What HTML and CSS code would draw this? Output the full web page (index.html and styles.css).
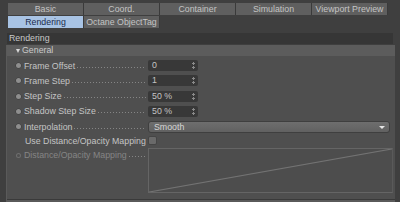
FILE: index.html
```html
<!DOCTYPE html>
<html>
<head>
<meta charset="utf-8">
<link rel="stylesheet" href="styles.css">
</head>
<body>
<div class="tabs">
  <div class="tabrow">
    <div class="tab">Basic</div>
    <div class="tab">Coord.</div>
    <div class="tab">Container</div>
    <div class="tab">Simulation</div>
    <div class="tab">Viewport Preview</div>
  </div>
  <div class="tabrow">
    <div class="tab sel">Rendering</div>
    <div class="tab">Octane ObjectTag</div>
  </div>
</div>
<div class="title">Rendering</div>
<div class="panel">
  <div class="group"><span class="tri"></span>General</div>
  <div class="rows">
    <div class="row">
      <div class="label"><span class="dot"></span><span class="txt">Frame Offset</span><span class="lead"></span></div>
      <div class="field">0<span class="spin"></span></div>
    </div>
    <div class="row">
      <div class="label"><span class="dot"></span><span class="txt">Frame Step</span><span class="lead"></span></div>
      <div class="field">1<span class="spin"></span></div>
    </div>
    <div class="row">
      <div class="label"><span class="dot"></span><span class="txt">Step Size</span><span class="lead"></span></div>
      <div class="field">50 %<span class="spin"></span></div>
    </div>
    <div class="row">
      <div class="label"><span class="dot"></span><span class="txt">Shadow Step Size</span><span class="lead"></span></div>
      <div class="field">50 %<span class="spin"></span></div>
    </div>
    <div class="row">
      <div class="label"><span class="dot"></span><span class="txt">Interpolation</span><span class="lead"></span></div>
      <div class="select">Smooth<span class="arrow"></span></div>
    </div>
    <div class="row crow">
      <div class="label"><span class="nodot"></span><span class="txt">Use Distance/Opacity Mapping</span></div>
      <div class="check"></div>
    </div>
    <div class="row curverow">
      <div class="label dim"><span class="dot dimdot"></span><span class="txt">Distance/Opacity Mapping</span><span class="lead"></span></div>
      <div class="curve">
        <svg viewBox="0 0 100 100" preserveAspectRatio="none"><line x1="0" y1="100" x2="100" y2="0" stroke="#737373" stroke-width="1.2" vector-effect="non-scaling-stroke"/></svg>
      </div>
    </div>
  </div>
  <div class="bottom"></div>
</div>
</body>
</html>
```

FILE: styles.css
```css
* { box-sizing: border-box; }
html, body { margin: 0; padding: 0; }
body {
  width: 400px;
  height: 202px;
  overflow: hidden;
  background: #3f3f3f;
  font-family: "Liberation Sans", Arial, sans-serif;
  font-size: 8.8px;
  color: #c6c6c6;
  padding-top: 3px;
}
.tabs { margin-left: 8px; }
.tabrow { display: flex; height: 12px; margin-bottom: 1px; }
.tab {
  width: 76px;
  height: 12px;
  line-height: 12px;
  text-align: center;
  background: #5f5f5f;
  color: #c4c4c4;
  border-right: 1px solid #3a3a3a;
  white-space: nowrap;
}
.tab.sel { background: #a8c3e4; color: #1c2c4c; }
.title {
  margin: 5px 7px 0 7px;
  height: 11px;
  line-height: 11px;
  background: #363636;
  padding-left: 2px;
  color: #c8c8c8;
}
.panel {
  margin: 1px 5px 0 6px;
  border-left: 1px solid #5a5a5a;
  background: #4f4f4f;
  height: 159px;
  display: flex;
  flex-direction: column;
}
.group {
  height: 11px;
  line-height: 11px;
  background: #5c5c5c;
  color: #cacaca;
  display: flex;
  align-items: center;
  padding-left: 9px;
}
.tri {
  width: 0; height: 0;
  border-left: 2.5px solid transparent;
  border-right: 2.5px solid transparent;
  border-top: 4px solid #d8d8d8;
  margin-right: 2px;
}
.rows { padding-top: 2px; flex: 1; }
.row { display: flex; align-items: center; height: 15.25px; }
.label {
  width: 141px;
  display: flex;
  align-items: center;
  padding-left: 9px;
  white-space: nowrap;
  color: #c4c4c4;
}
.dot {
  width: 5px; height: 5px;
  border-radius: 50%;
  background: #8e8e8e;
  box-shadow: 0 0 0 0.5px #3d3d3d;
  margin-right: 3px;
  flex: none;
}
.nodot { width: 9px; flex: none; }
.lead {
  flex: 1;
  height: 1px;
  align-self: flex-end;
  margin: 0 2px 3px 2px;
  background: repeating-linear-gradient(to right, #858585 0 1px, transparent 1px 3px);
}
.field {
  width: 50px;
  height: 11px;
  line-height: 11px;
  background: #383838;
  border-radius: 2px;
  padding-left: 4px;
  color: #c4c4c4;
  position: relative;
}
.spin {
  position: absolute;
  right: 3px; top: 2px;
  width: 3px; height: 7px;
  background:
    linear-gradient(#8a8a8a, #8a8a8a) 1px 0 / 1px 3px no-repeat,
    linear-gradient(#8a8a8a, #8a8a8a) 1px 4px / 1px 3px no-repeat,
    linear-gradient(#8a8a8a, #8a8a8a) 0 1px / 3px 1px no-repeat,
    linear-gradient(#8a8a8a, #8a8a8a) 0 5px / 3px 1px no-repeat;
}
.select {
  width: 242px;
  height: 12px;
  line-height: 11px;
  background: linear-gradient(#6e6e6e, #616161);
  border: 1px solid #3f3f3f;
  border-radius: 3px;
  padding-left: 5px;
  color: #d6d6d6;
  position: relative;
}
.arrow {
  position: absolute;
  right: 4px; top: 4px;
  width: 0; height: 0;
  border-left: 3px solid transparent;
  border-right: 3px solid transparent;
  border-top: 3px solid #e6e6e6;
}
.crow { height: 13px; }
.check {
  width: 9px; height: 9px;
  border-radius: 2px;
  background: #6a6a6a;
  border: 1px solid #454545;
}
.curverow { align-items: flex-start; height: 46px; margin-top: 1px; }
.curverow .label { margin-top: 2px; }
.dim { color: #858585; }
.dimdot { background: transparent; box-shadow: inset 0 0 0 1px #6e6e6e; }
.curve {
  width: 245px;
  height: 45px;
  border: 1px solid #656565;
  border-right-color: #5a5a5a;
  background: #4d4d4d;
}
.curve svg { display: block; width: 100%; height: 100%; }
.bottom {
  height: 5px;
  border-top: 1px solid #3a3a3a;
  background: #5a5a5a;
}
```
